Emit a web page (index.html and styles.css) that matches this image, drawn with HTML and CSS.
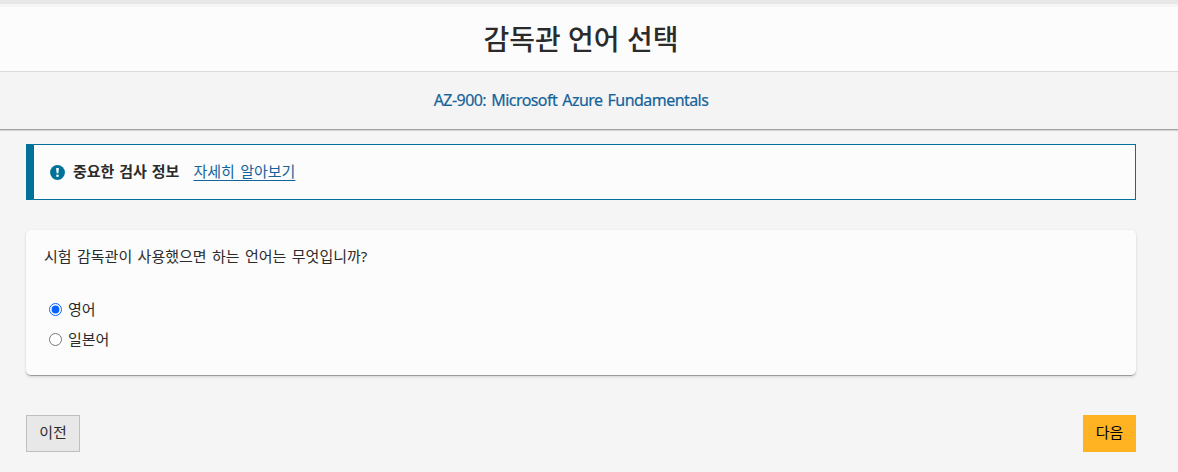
FILE: index.html
```html
<!DOCTYPE html>
<html lang="ko">
<head>
    <meta charset="UTF-8">
    <meta name="viewport" content="width=device-width, initial-scale=1.0">
    <title>감독관 언어 선택</title>
    <link rel="stylesheet" href="styles.css">
</head>
<body>
    <header>
        <h1 class="page-title">감독관 언어 선택</h1>
        <div class="exam-bar">
            <span class="exam-name">AZ-900: Microsoft Azure Fundamentals</span>
        </div>
    </header>
    <main class="content">
        <div class="notice">
            <svg class="notice-icon" viewBox="0 0 16 16" aria-hidden="true">
                <circle cx="8" cy="8" r="7.9" fill="#007298"/>
                <path d="M6.6 3.2h2.8l-.4 5.6H7z" fill="#fff"/>
                <circle cx="8" cy="11.4" r="1.4" fill="#fff"/>
            </svg>
            <strong class="notice-title">중요한 검사 정보</strong>
            <a class="notice-link" href="#">자세히 알아보기</a>
        </div>
        <form id="language-form">
            <div class="card">
                <p class="question">시험 감독관이 사용했으면 하는 언어는 무엇입니까?</p>
                <label class="option">
                    <input type="radio" name="language" value="en" checked>
                    <span>영어</span>
                </label>
                <label class="option">
                    <input type="radio" name="language" value="ja">
                    <span>일본어</span>
                </label>
            </div>
            <div class="actions">
                <button type="button" class="btn btn-prev">이전</button>
                <button type="submit" class="btn btn-next">다음</button>
            </div>
        </form>
    </main>
</body>
</html>
```
FILE: styles.css
```css
* {
    margin: 0;
    padding: 0;
    box-sizing: border-box;
}

body {
    font-family: "Noto Sans", "Noto Sans CJK KR", sans-serif;
    font-size: 15px;
    line-height: 20px;
    color: #2b2b2b;
    background-color: #f5f5f5;
    border-top: 4px solid #e7e7e7;
    overflow: hidden;
}

header {
    padding-top: 3px;
    border-bottom: 1px solid #a0a0a0;
    box-shadow: 0 1px 1px #d8d8d8;
}

/* Título de la página */
.page-title {
    height: 65px;
    padding-right: 16px;
    font-size: 28px;
    font-weight: 500;
    line-height: 64px;
    text-align: center;
    background-color: #fcfcfc;
    border-bottom: 1px solid #dadada;
}

.exam-bar {
    height: 57px;
    padding-right: 36px;
    line-height: 57px;
    text-align: center;
    background-color: #f4f4f4;
}

.exam-name {
    font-size: 16px;
    letter-spacing: -0.55px;
    word-spacing: 1.5px;
    color: #14639a;
    -webkit-text-stroke: 0.2px #14639a;
}

.content {
    padding: 14px 42px 0 26px;
}

/* Aviso */
.notice {
    display: flex;
    align-items: center;
    height: 56px;
    padding-left: 16px;
    background-color: #fcfcfc;
    border: 1px solid #007298;
    border-left-width: 8px;
}

.notice-icon {
    width: 15px;
    height: 15px;
    margin-right: 8px;
}

.notice-title {
    margin-right: 14px;
    padding-bottom: 2px;
    font-weight: 700;
    word-spacing: 1px;
}

.notice-link {
    padding-bottom: 2px;
    color: #14639a;
    word-spacing: 1.5px;
    text-underline-offset: 3px;
}

.card {
    height: 146px;
    margin-top: 30px;
    padding: 16px 18px;
    background-color: #fcfcfc;
    border-bottom: 1px solid #9c9c9c;
    border-radius: 5px;
    box-shadow: 0 1px 3px rgba(0, 0, 0, 0.14);
}

.question {
    margin-bottom: 28px;
    word-spacing: 1.5px;
}

.option {
    display: flex;
    align-items: center;
    height: 30px;
    padding-left: 5px;
}

.option input {
    width: 13px;
    height: 13px;
    margin-right: 6px;
    accent-color: #0b63ff;
}

/* Botones de navegación */
.actions {
    display: flex;
    justify-content: space-between;
    margin-top: 39px;
}

.btn {
    height: 37px;
    padding-bottom: 3px;
    font: inherit;
    color: #2b2b2b;
    cursor: pointer;
}

.btn-prev {
    width: 54px;
    background-color: #e8e8e8;
    border: 1px solid #bfbfbf;
}

.btn-next {
    width: 53px;
    color: #000;
    background-color: #ffb222;
    border: none;
}
```
